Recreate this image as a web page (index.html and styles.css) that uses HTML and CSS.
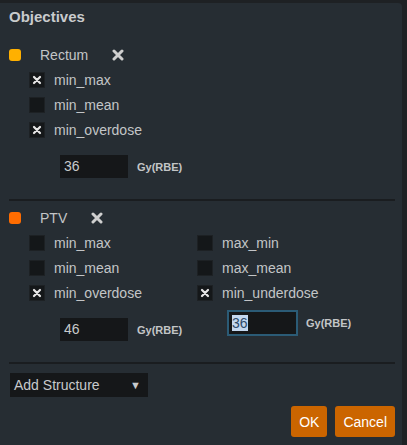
FILE: index.html
```html
<!DOCTYPE html>
<html>
<head>
<meta charset="utf-8">
<link rel="stylesheet" href="styles.css">
</head>
<body>
<div class="panel">
  <div class="title">Objectives</div>

  <div class="section section-first">
    <div class="head">
      <span class="dot dot-amber"></span>
      <span class="name">Rectum</span>
      <svg class="remove" viewBox="0 0 12 12" width="12" height="12"><path d="M2 2 L10 10 M10 2 L2 10" stroke="#cfcfcf" stroke-width="3" stroke-linecap="round"/></svg>
    </div>
    <div class="cols">
      <div class="col">
        <label class="row"><span class="cb"><svg viewBox="0 0 10 10" width="10" height="10"><path d="M2 2 L8 8 M8 2 L2 8" stroke="#e6e6e6" stroke-width="2.2" stroke-linecap="round"/></svg></span><span>min_max</span></label>
        <label class="row"><span class="cb"></span><span>min_mean</span></label>
        <label class="row"><span class="cb"><svg viewBox="0 0 10 10" width="10" height="10"><path d="M2 2 L8 8 M8 2 L2 8" stroke="#e6e6e6" stroke-width="2.2" stroke-linecap="round"/></svg></span><span>min_overdose</span></label>
        <div class="dose"><span class="input">36</span><span class="unit">Gy(RBE)</span></div>
      </div>
    </div>
  </div>

  <div class="sep"></div>

  <div class="section">
    <div class="head">
      <span class="dot dot-orange"></span>
      <span class="name">PTV</span>
      <svg class="remove" viewBox="0 0 12 12" width="12" height="12"><path d="M2 2 L10 10 M10 2 L2 10" stroke="#cfcfcf" stroke-width="3" stroke-linecap="round"/></svg>
    </div>
    <div class="cols">
      <div class="col">
        <label class="row"><span class="cb"></span><span>min_max</span></label>
        <label class="row"><span class="cb"></span><span>min_mean</span></label>
        <label class="row"><span class="cb"><svg viewBox="0 0 10 10" width="10" height="10"><path d="M2 2 L8 8 M8 2 L2 8" stroke="#e6e6e6" stroke-width="2.2" stroke-linecap="round"/></svg></span><span>min_overdose</span></label>
        <div class="dose"><span class="input">46</span><span class="unit">Gy(RBE)</span></div>
      </div>
      <div class="col col-right">
        <label class="row"><span class="cb"></span><span>max_min</span></label>
        <label class="row"><span class="cb"></span><span>max_mean</span></label>
        <label class="row"><span class="cb"><svg viewBox="0 0 10 10" width="10" height="10"><path d="M2 2 L8 8 M8 2 L2 8" stroke="#e6e6e6" stroke-width="2.2" stroke-linecap="round"/></svg></span><span>min_underdose</span></label>
        <div class="dose dose-focus"><span class="input focus"><span class="sel">36</span></span><span class="unit">Gy(RBE)</span></div>
      </div>
    </div>
  </div>

  <div class="sep"></div>

  <div class="select"><span>Add Structure</span><span class="arrow">▼</span></div>

  <div class="actions">
    <button class="btn">OK</button>
    <button class="btn">Cancel</button>
  </div>
</div>
</body>
</html>
```

FILE: styles.css
```css
html, body {
  margin: 0;
  padding: 0;
  background: #1e2124;
  height: 100%;
  overflow: hidden;
}
body {
  font-family: "Liberation Sans", Arial, sans-serif;
  font-size: 14px;
  color: #c3c5c7;
}
.panel {
  margin-top: 3px;
  width: 402px;
  height: 460px;
  box-sizing: border-box;
  background: #262d33;
  border-top-right-radius: 4px;
  padding: 3px 7px 0 9px;
}
.title {
  font-weight: bold;
  font-size: 15px;
  height: 22px;
  line-height: 22px;
  color: #c9cbcd;
}
.head {
  display: flex;
  align-items: center;
  height: 25px;
  margin-top: 4px;
}
.section-first .head { margin-top: 14px; }
.dot {
  width: 12px;
  height: 12px;
  border-radius: 3px;
}
.dot-amber { background: #ffb000; }
.dot-orange { background: #ff6c00; }
.name { margin-left: 19px; }
.remove { margin-left: 24px; }
.cols {
  display: flex;
}
.col {
  width: 168px;
  padding-left: 20px;
}
.col-right { padding-left: 0; }
.row {
  display: flex;
  align-items: center;
  height: 25px;
}
.cb {
  width: 16px;
  height: 16px;
  box-sizing: border-box;
  background: #141719;
  border: 1px solid #1d2124;
  margin-right: 9px;
  display: flex;
  align-items: center;
  justify-content: center;
}
.dose {
  display: flex;
  align-items: center;
  margin-top: 13px;
  margin-left: 31px;
}
.dose-focus { margin-top: 5px; margin-left: 30px; }
.input {
  width: 68px;
  height: 23px;
  box-sizing: border-box;
  background: #151719;
  padding-left: 4px;
  line-height: 23px;
  color: #c8cacc;
}
.input.focus {
  width: 71px;
  height: 26px;
  border: 2px solid #2b5b76;
  padding-left: 3px;
  line-height: 22px;
}
.sel {
  background: #c3d7ef;
  color: #2c4a6a;
}
.unit {
  font-size: 11px;
  font-weight: bold;
  margin-left: 9px;
}
.dose-focus .unit { margin-left: 8px; }
.sep {
  height: 2px;
  background: #1a1d20;
  margin-top: 21px;
}
.select {
  margin-top: 9px;
  margin-left: 1px;
  width: 138px;
  height: 24px;
  box-sizing: border-box;
  background: #151719;
  display: flex;
  align-items: center;
  justify-content: space-between;
  padding: 0 7px 0 4px;
  color: #c8cacc;
}
.arrow { font-size: 11px; }
.actions {
  display: flex;
  justify-content: flex-end;
  gap: 8px;
  margin-top: 9px;
}
.btn {
  height: 31px;
  padding: 0 8px;
  background: #cb6500;
  border: none;
  border-radius: 3px;
  color: #ffffff;
  font-family: "Liberation Sans", Arial, sans-serif;
  font-size: 14px;
}
```
